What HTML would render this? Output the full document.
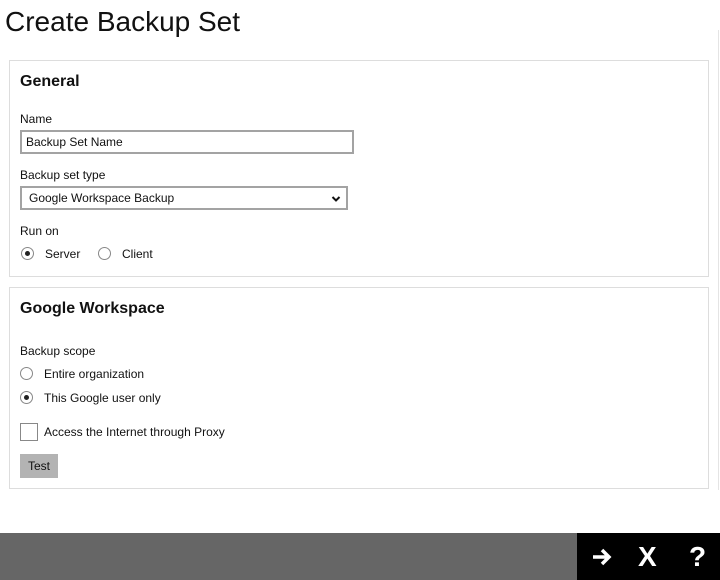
<!DOCTYPE html>
<html><head><style>
*{margin:0;padding:0;box-sizing:border-box}
body{width:720px;height:580px;background:#fff;position:relative;overflow:hidden;font-family:"Liberation Sans",Arial,sans-serif;color:#111}
.a{position:absolute;white-space:nowrap}
.lbl{font-size:12px}
.panel{position:absolute;border:1px solid #ddd;background:#fff}
h2{position:absolute;font-size:16px;font-weight:bold}
.radio{position:absolute;width:13px;height:13px;border:1px solid #888;border-radius:50%;background:#fff}
.radio.on::after{content:"";position:absolute;left:3px;top:3px;width:5px;height:5px;border-radius:50%;background:#222}
</style></head><body>
<div class="a" style="left:5px;top:6px;font-size:28px;color:#111">Create Backup Set</div>
<div class="a" style="left:718px;top:30px;width:1px;height:460px;background:#e4e4e4"></div>

<div class="panel" style="left:9px;top:60px;width:700px;height:217px"></div>
<h2 class="a" style="left:20px;top:73px">General</h2>
<div class="a lbl" style="left:20px;top:112px">Name</div>
<div class="a" style="left:20px;top:130px;width:334px;height:24px;border:2px solid #a3a3a3;font-size:12px;padding:3px 0 0 4px">Backup Set Name</div>
<div class="a lbl" style="left:20px;top:168px">Backup set type</div>
<div class="a" style="left:20px;top:186px;width:328px;height:24px;border:2px solid #a3a3a3;font-size:12px;padding:3px 0 0 7px">Google Workspace Backup
<svg style="position:absolute;right:5px;top:7px" width="10" height="8" viewBox="0 0 10 8"><path d="M1.5 2 L5 5.5 L8.5 2" stroke="#111" stroke-width="2" fill="none"/></svg></div>
<div class="a lbl" style="left:20px;top:224px">Run on</div>
<div class="radio on" style="left:21px;top:247px"></div>
<div class="a lbl" style="left:45px;top:247px">Server</div>
<div class="radio" style="left:98px;top:247px"></div>
<div class="a lbl" style="left:122px;top:247px">Client</div>

<div class="panel" style="left:9px;top:287px;width:700px;height:202px"></div>
<h2 class="a" style="left:20px;top:300px">Google Workspace</h2>
<div class="a lbl" style="left:20px;top:344px">Backup scope</div>
<div class="radio" style="left:20px;top:367px"></div>
<div class="a lbl" style="left:44px;top:367px">Entire organization</div>
<div class="radio on" style="left:20px;top:391px"></div>
<div class="a lbl" style="left:44px;top:391px">This Google user only</div>
<div class="a" style="left:20px;top:423px;width:18px;height:18px;border:1px solid #888;background:#fff"></div>
<div class="a lbl" style="left:44px;top:425px">Access the Internet through Proxy</div>
<div class="a" style="left:20px;top:454px;width:38px;height:24px;background:#b3b3b3;font-size:12px;text-align:center;line-height:24px">Test</div>

<div class="a" style="left:0;top:533px;width:720px;height:47px;background:#666"></div>
<div class="a" style="left:577px;top:533px;width:143px;height:47px;background:#000"></div>
<svg class="a" style="left:591px;top:546px" width="22" height="22" viewBox="0 0 22 22"><path d="M2 11 H18 M11 4 L18 11 L11 18" stroke="#fff" stroke-width="3.5" fill="none"/></svg>
<div class="a" style="left:638px;top:542px;font-size:28px;font-weight:bold;color:#fff;line-height:30px">X</div>
<div class="a" style="left:689px;top:542px;font-size:28px;font-weight:bold;color:#fff;line-height:30px">?</div>
</body></html>
